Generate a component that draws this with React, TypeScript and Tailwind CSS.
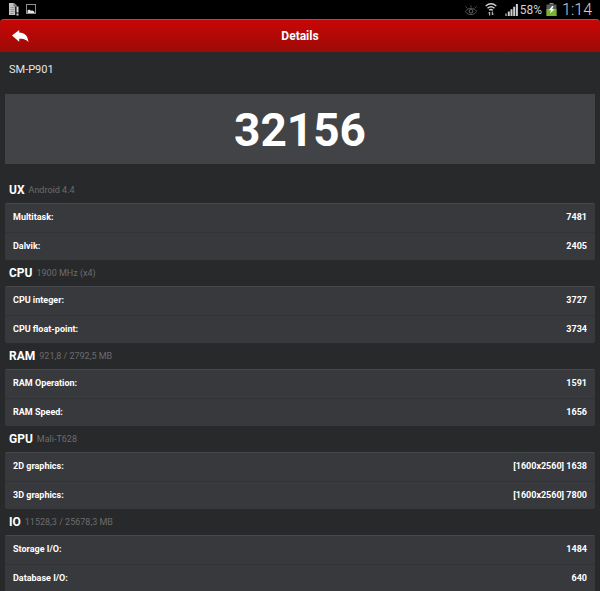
import { type ReactNode } from 'react'

function DocumentAlertIcon() {
  return (
    <svg width="12" height="13" viewBox="0 0 12 13" fill="none" aria-hidden="true">
      <path d="M1 0h5l3 3v9H1z" fill="#c4c4c4" />
      <path d="M6 0v3h3" stroke="#555" strokeWidth="0.8" />
      <path d="M2.5 4.5h4M2.5 6.5h4M2.5 8.5h4M2.5 10.5h3" stroke="#777" strokeWidth="0.6" />
      <path d="M7.200 3.500h4v9h-4z" fill="#000" />
      <path d="M8.500 3.500h2v6h-2zM8.500 10.500h2v2h-2z" fill="#d8d8d8" />
    </svg>
  )
}

function PictureIcon() {
  return (
    <svg width="10" height="11" viewBox="0 0 10 11" fill="none" aria-hidden="true">
      <rect x="0.5" y="0.5" width="9" height="9" stroke="#909090" />
      <path d="M1.5 9V6.4l1.6-.8 1.9 1.2 1.4-.3 2.100 1.200V9z" fill="#e8e8e8" />
    </svg>
  )
}

function EyeIcon() {
  return (
    <svg width="12" height="12" viewBox="0 0 12 12" fill="none" stroke="#565656" aria-hidden="true">
      <path d="M.5 2.500 2.500 4.500M11.500 2.500 9.500 4.500M6 1.500v2" strokeWidth="0.900" />
      <path d="M.3 7.500C3 3.300 9 3.300 11.700 7.500" />
      <path d="M.3 7.500C3 11.700 9 11.700 11.700 7.500" />
      <circle cx="6" cy="7.300" r="1.800" strokeWidth="1.200" />
    </svg>
  )
}

function WifiIcon() {
  return (
    <svg width="12" height="13" viewBox="0 0 12 13" fill="none" stroke="#d2d2d2" aria-hidden="true">
      <path d="M.7 3Q6-1.400 11.300 3" strokeWidth="1.400" />
      <path d="M2.500 5.200Q6 2.200 9.500 5.200" strokeWidth="1.400" />
      <path d="M4.200 7.300Q6 5.800 7.800 7.300" strokeWidth="1.400" />
      <path d="M4.700 12.500V9M3.400 10.300 4.700 9M7.300 8.500V12M8.600 10.700 7.300 12" strokeWidth="1" />
    </svg>
  )
}

function SignalIcon() {
  return (
    <svg width="13" height="12" viewBox="0 0 13 12" aria-hidden="true">
      <path d="M0 9.500h2V12H0z" fill="#777" />
      <path d="M2.800 7.500h2V12h-2zM5.500 5.300h2V12h-2zM8.200 2.800h2V12h-2zM10.900 0h2v12h-2z" fill="#cfcfcf" />
    </svg>
  )
}

function BatteryIcon() {
  return (
    <svg width="11" height="13" viewBox="0 0 11 13" aria-hidden="true">
      <path d="M3.500 0h4v1.500h-4z" fill="#8b9389" />
      <path d="M.5 1.500h10V13H.5z" fill="#59605a" />
      <path d="M.5 6h10v7H.5z" fill="#78b52b" />
      <path d="M6.200 3 2.800 7.200h2.400L4 10.500 8.500 6.300H6.200L7.500 3z" fill="#fff" />
    </svg>
  )
}

function BackIcon() {
  return (
    <svg width="17" height="13" viewBox="0 0 17 13" fill="#fff" aria-hidden="true">
      <path d="M0 5.600 7.200 0v2.400C12.800 2.500 15.900 5.500 16.500 12.300 14.500 9.300 11.500 8.700 7.200 8.700v3z" />
    </svg>
  )
}

interface Section {
  title: string
  info: string
  rows: { label: string; value: string }[]
}

const sections: Section[] = [
  {
    title: 'UX',
    info: 'Android 4.4',
    rows: [
      { label: 'Multitask:', value: '7481' },
      { label: 'Dalvik:', value: '2405' },
    ],
  },
  {
    title: 'CPU',
    info: '1900 MHz (x4)',
    rows: [
      { label: 'CPU integer:', value: '3727' },
      { label: 'CPU float-point:', value: '3734' },
    ],
  },
  {
    title: 'RAM',
    info: '921,8 / 2792,5 MB',
    rows: [
      { label: 'RAM Operation:', value: '1591' },
      { label: 'RAM Speed:', value: '1656' },
    ],
  },
  {
    title: 'GPU',
    info: 'Mali-T628',
    rows: [
      { label: '2D graphics:', value: '[1600x2560] 1638' },
      { label: '3D graphics:', value: '[1600x2560] 7800' },
    ],
  },
  {
    title: 'IO',
    info: '11528,3 / 25678,3 MB',
    rows: [
      { label: 'Storage I/O:', value: '1484' },
      { label: 'Database I/O:', value: '640' },
    ],
  },
]

function StatusBar() {
  return (
    <div className="flex h-[19px] shrink-0 items-center justify-between bg-black px-2 text-[#d0d0d0]">
      <div className="flex items-center gap-1.5">
        <DocumentAlertIcon />
        <PictureIcon />
      </div>
      <div className="flex items-center gap-1">
        <div className="flex items-center gap-2">
          <EyeIcon />
          <WifiIcon />
          <div className="flex items-center gap-0.5">
            <SignalIcon />
            <span className="text-[12px] leading-none">58%</span>
          </div>
        </div>
        <BatteryIcon />
        <span className="pl-px text-[16px] leading-none font-light">1:14</span>
      </div>
    </div>
  )
}

function TitleBar({ children }: { children: ReactNode }) {
  return (
    <div className="bg-black">
      <header className="grid h-[33px] grid-cols-[1fr_auto_1fr] items-center rounded-t border-t border-[#a8504c] bg-linear-to-b from-[#c80606] to-[#9c0a06] px-3">
        <button type="button" aria-label="Back" className="justify-self-start">
          <BackIcon />
        </button>
        <h1 className="text-[12px] leading-none font-bold">{children}</h1>
      </header>
    </div>
  )
}

function ResultSection({ title, info, rows }: Section) {
  return (
    <section>
      <div className="flex h-[26px] items-center gap-1 px-1">
        <h2 className="text-[12px] leading-none font-bold">{title}</h2>
        <span className="text-[9px] leading-none text-[#6c6c6e]">{info}</span>
      </div>
      <div className="overflow-hidden rounded-xs border-t border-[#48494c] bg-[#38393d]">
        <table className="w-full border-collapse text-[9px] leading-none">
          <tbody>
            {rows.map((row) => (
              <tr key={row.label} className="h-7 border-t border-[#323336] first:border-t-0">
                <th scope="row" className="px-2 text-left font-bold">
                  {row.label}
                </th>
                <td className="px-2 text-right font-bold">{row.value}</td>
              </tr>
            ))}
          </tbody>
        </table>
      </div>
    </section>
  )
}

export default function App() {
  return (
    <div className="flex h-screen flex-col overflow-hidden bg-[#28292b] font-[Roboto,sans-serif] text-white">
      <StatusBar />
      <TitleBar>Details</TitleBar>
      <main className="min-h-0 flex-1 overflow-hidden px-[5px]">
        <p className="flex h-[42px] items-center px-1 pb-2 text-[11px] leading-none text-[#e4e4e4]">
          SM-P901
        </p>
        <div className="flex h-[70px] items-center justify-center bg-[#424347] pt-0.5 text-[46px] leading-none font-bold">
          32156
        </div>
        <div className="pt-[13px]">
          {sections.map((section) => (
            <ResultSection key={section.title} {...section} />
          ))}
        </div>
      </main>
    </div>
  )
}
